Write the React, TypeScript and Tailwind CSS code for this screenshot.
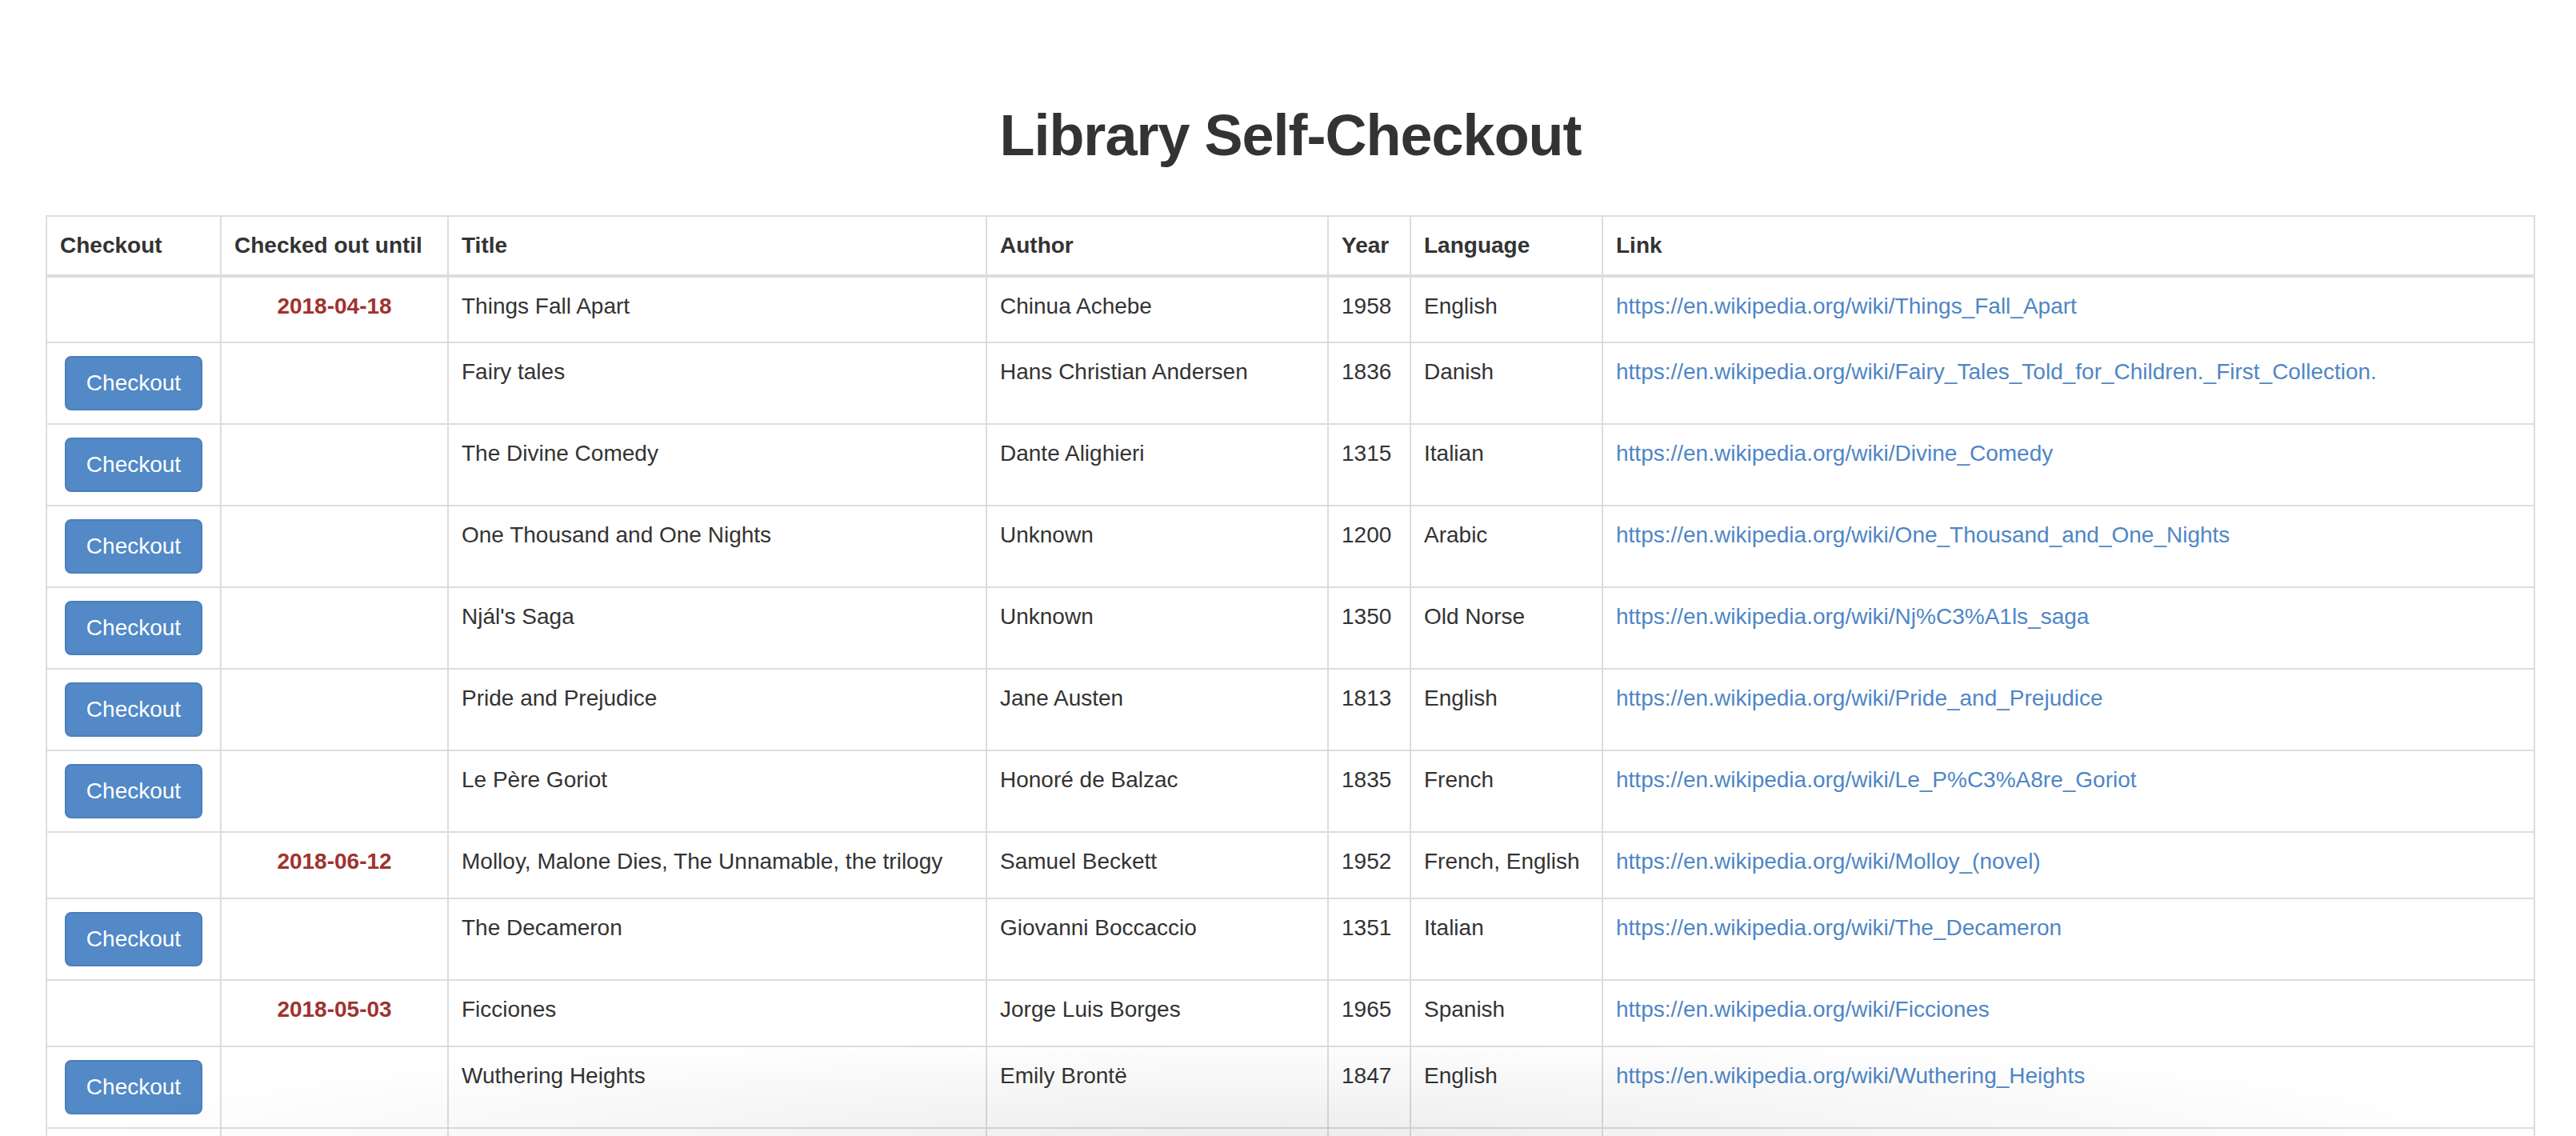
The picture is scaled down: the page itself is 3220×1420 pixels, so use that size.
type Book = {
  due?: string;
  title: string;
  author: string;
  year: string;
  lang: string;
  link: string;
};

const WIKI = 'https://en.wikipedia.org/wiki/';

const books: Book[] = [
  { due: '2018-04-18', title: 'Things Fall Apart', author: 'Chinua Achebe', year: '1958', lang: 'English', link: WIKI + 'Things_Fall_Apart' },
  { title: 'Fairy tales', author: 'Hans Christian Andersen', year: '1836', lang: 'Danish', link: WIKI + 'Fairy_Tales_Told_for_Children._First_Collection.' },
  { title: 'The Divine Comedy', author: 'Dante Alighieri', year: '1315', lang: 'Italian', link: WIKI + 'Divine_Comedy' },
  { title: 'One Thousand and One Nights', author: 'Unknown', year: '1200', lang: 'Arabic', link: WIKI + 'One_Thousand_and_One_Nights' },
  { title: "Njál's Saga", author: 'Unknown', year: '1350', lang: 'Old Norse', link: WIKI + 'Nj%C3%A1ls_saga' },
  { title: 'Pride and Prejudice', author: 'Jane Austen', year: '1813', lang: 'English', link: WIKI + 'Pride_and_Prejudice' },
  { title: 'Le Père Goriot', author: 'Honoré de Balzac', year: '1835', lang: 'French', link: WIKI + 'Le_P%C3%A8re_Goriot' },
  { due: '2018-06-12', title: 'Molloy, Malone Dies, The Unnamable, the trilogy', author: 'Samuel Beckett', year: '1952', lang: 'French, English', link: WIKI + 'Molloy_(novel)' },
  { title: 'The Decameron', author: 'Giovanni Boccaccio', year: '1351', lang: 'Italian', link: WIKI + 'The_Decameron' },
  { due: '2018-05-03', title: 'Ficciones', author: 'Jorge Luis Borges', year: '1965', lang: 'Spanish', link: WIKI + 'Ficciones' },
  { title: 'Wuthering Heights', author: 'Emily Brontë', year: '1847', lang: 'English', link: WIKI + 'Wuthering_Heights' },
];

const cell = 'border-2 border-[#ddd] px-[16px] py-[16px] align-top';
const head = 'border-2 border-b-4 border-[#ddd] px-[16px] py-[16px] align-bottom text-left font-bold';

export default function App() {
  return (
    <div className="relative min-h-screen bg-white text-[#333] font-['Liberation_Sans',Arial,sans-serif] text-[28px] leading-[40px]">
      <div className="pl-[57px] pr-[51px]">
        <h1 className="pt-[130px] mb-[60px] text-center text-[72px] leading-[79px] font-bold tracking-[-1px]">
          Library Self-Checkout
        </h1>

        <table className="w-full table-fixed border-collapse border-2 border-[#ddd]">
          <colgroup>
            <col className="w-[218px]" />
            <col className="w-[284px]" />
            <col className="w-[673px]" />
            <col className="w-[427px]" />
            <col className="w-[103px]" />
            <col className="w-[240px]" />
            <col />
          </colgroup>
          <thead>
            <tr>
              <th className={head}>Checkout</th>
              <th className={head}>Checked out until</th>
              <th className={head}>Title</th>
              <th className={head}>Author</th>
              <th className={head}>Year</th>
              <th className={head}>Language</th>
              <th className={head}>Link</th>
            </tr>
          </thead>
          <tbody>
            {books.map((b) => (
              <tr key={b.title} className={b.due ? 'h-[83px]' : ''}>
                <td className={cell + ' text-center'}>
                  {!b.due && (
                    <button className="inline-block w-[172px] h-[68px] rounded-[8px] border-2 border-[#4a7fba] bg-[#5289c6] text-white text-[28px] leading-[64px]">
                      Checkout
                    </button>
                  )}
                </td>
                <td className={cell + ' text-center font-bold text-[#a0322f]'}>{b.due}</td>
                <td className={cell}>{b.title}</td>
                <td className={cell}>{b.author}</td>
                <td className={cell}>{b.year}</td>
                <td className={cell}>{b.lang}</td>
                <td className={cell + ' whitespace-nowrap'}>
                  <a href={b.link} className="text-[#4f86c6]">{b.link}</a>
                </td>
              </tr>
            ))}
            {/* next row only peeks in at the bottom edge */}
            <tr className="h-[100px]">
              <td className={cell} />
              <td className={cell} />
              <td className={cell} />
              <td className={cell} />
              <td className={cell} />
              <td className={cell} />
              <td className={cell} />
            </tr>
          </tbody>
        </table>
      </div>

      {/* soft shadow that sits over the bottom of the screenshot */}
      <div className="pointer-events-none absolute left-[160px] right-[170px] top-[1300px] h-[120px] bg-[radial-gradient(ellipse_at_bottom,rgba(0,0,0,0.07),rgba(0,0,0,0.02)_55%,transparent_75%)]" />
    </div>
  );
}
